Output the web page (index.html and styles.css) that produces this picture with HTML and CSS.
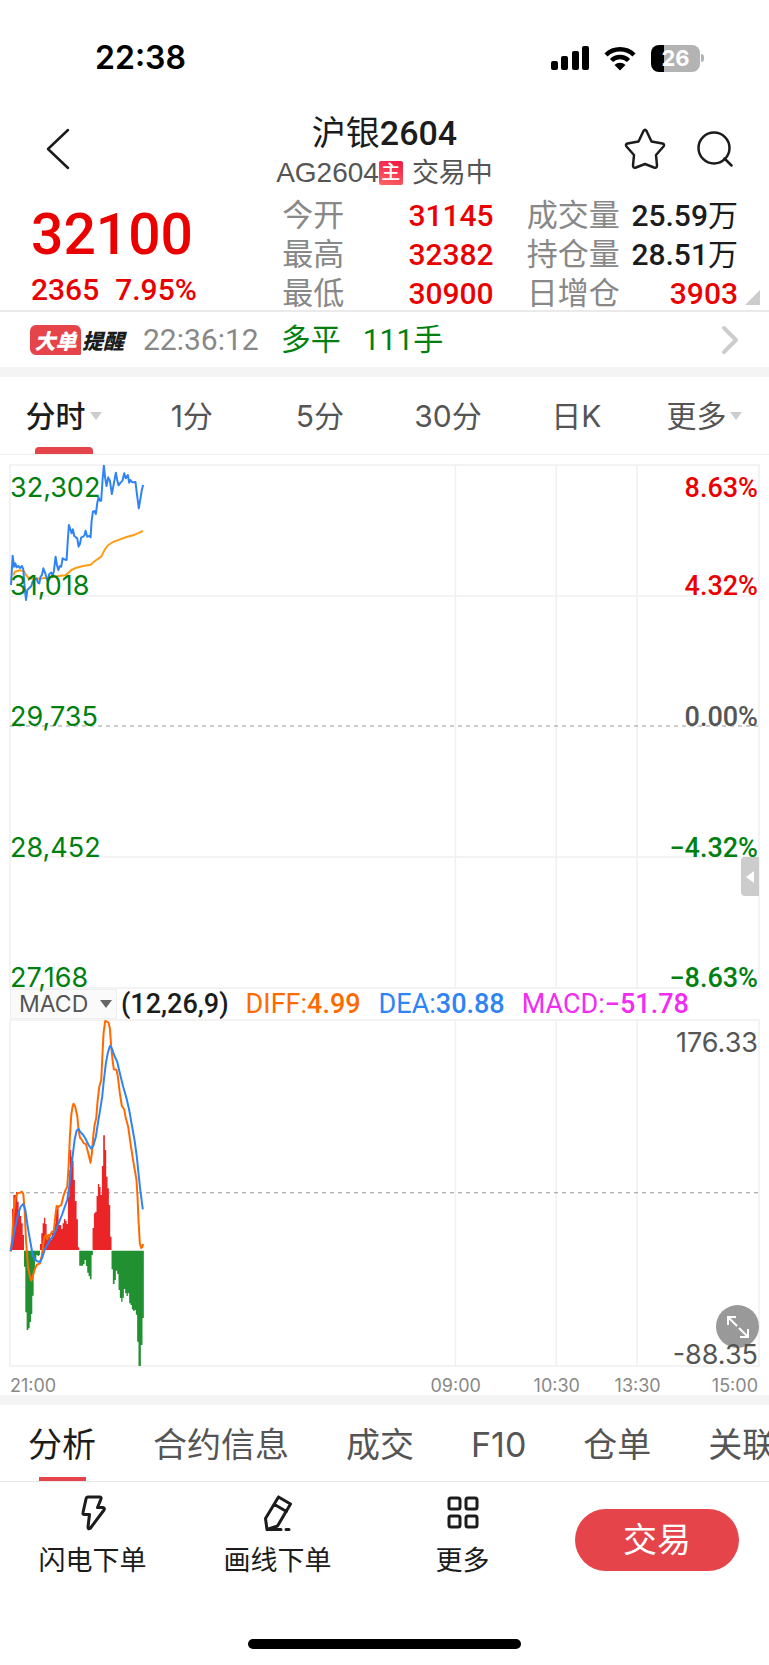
FILE: index.html
```html
<!DOCTYPE html>
<html lang="zh-CN">
<head>
<meta charset="utf-8">
<meta name="viewport" content="width=device-width, initial-scale=1">
<title>沪银2604</title>
<link rel="stylesheet" href="styles.css">
</head>
<body>
<div class="app">
  <div class="status">
    <span class="clock">22:38</span>
    <div class="status-icons">
      <svg class="signal" viewBox="0 0 38 24" aria-hidden="true"><rect x="0" y="15" width="7" height="9" rx="2"/><rect x="10" y="10" width="7" height="14" rx="2"/><rect x="21" y="5" width="7" height="19" rx="2"/><rect x="31" y="0" width="7" height="24" rx="2"/></svg>
      <svg class="wifi" viewBox="0 0 34 25" aria-hidden="true"><path d="M3 9a20 20 0 0 1 28 0M8.500 14.500a12 12 0 0 1 17 0" fill="none" stroke="#000" stroke-width="4.500"/><path d="M17 24.500l-5.500-5.500a8 8 0 0 1 11 0z"/></svg>
      <div class="battery"><span class="battery-body">26</span><span class="battery-tip"></span></div>
    </div>
  </div>

  <header class="nav">
    <button class="icon-btn back" aria-label="返回"><svg width="24" height="42" viewBox="0 0 24 42"><path d="M22 2L2 21l20 19"/></svg></button>
    <div class="heading">
      <h1 class="title">沪银<span class="title-code">2604</span></h1>
      <p class="subtitle">AG2604<span class="badge">主</span><span class="state">交易中</span></p>
    </div>
    <div class="nav-tools">
      <button class="icon-btn" aria-label="自选"><svg width="42" height="42" viewBox="0 0 42 42"><path d="M19.500 3Q21 .5 22.500 3L27.500 13.500 38.500 15.500Q41 16.500 39.500 18.500L32 27 33 37.500Q33 40.500 30 39.500L21 36 12 39.500Q9 40.500 9 37.500L10 27 2.500 18.500Q1 16.500 3.500 15.500L14.500 13.500Z"/></svg></button>
      <button class="icon-btn" aria-label="搜索"><svg width="38" height="38" viewBox="0 0 38 38"><circle cx="18" cy="18" r="15.500"/><path d="M28.500 28.500l7 7"/></svg></button>
    </div>
  </header>

  <section class="quote">
    <div class="last">
      <div class="price">32100</div>
      <div class="change"><span>2365</span><span>7.95%</span></div>
    </div>
    <dl class="stats">
      <div class="stat"><dt>今开</dt><dd class="up">31145</dd></div>
      <div class="stat"><dt>最高</dt><dd class="up">32382</dd></div>
      <div class="stat"><dt>最低</dt><dd class="up">30900</dd></div>
    </dl>
    <dl class="stats">
      <div class="stat"><dt>成交量</dt><dd>25.59<span class="unit">万</span></dd></div>
      <div class="stat"><dt>持仓量</dt><dd>28.51<span class="unit">万</span></dd></div>
      <div class="stat"><dt>日增仓</dt><dd class="up">3903</dd></div>
    </dl>
    <svg class="corner" viewBox="0 0 15 15" aria-hidden="true"><path d="M15 0v15H0z" fill="#ccc"/></svg>
  </section>

  <a class="alert" href="#orders">
    <span class="tag"><span class="tag-hot">大单</span><span class="tag-rest">提醒</span></span>
    <span class="alert-time">22:36:12</span>
    <span class="alert-side">多平</span>
    <span class="alert-lots">111手</span>
    <svg class="chev" viewBox="0 0 18 30" aria-hidden="true"><path d="M3 3l12 12L3 27"/></svg>
  </a>

  <nav class="periods">
    <button class="period is-on">分时<i class="caret"></i></button>
    <button class="period">1分</button>
    <button class="period">5分</button>
    <button class="period">30分</button>
    <button class="period">日K</button>
    <button class="period">更多<i class="caret"></i></button>
  </nav>

  <section class="charts">
    <div class="panel panel-price">
      <svg class="plot" viewBox="30 45 2250 1569" preserveAspectRatio="none" aria-hidden="true">
        <path class="grid" d="M30 45H2280V1614H30ZM30 438H2280M30 1221H2280M1368 45V1614M1671 45V1614M1914 45V1614"/>
        <path class="mid" d="M30 828H2280"/>
        <path class="line avg" d="M40 376L44 366 52 363 62 361 72 364 78 375 86 384 100 387 130 385 160 380 196 376 204 370 214 360 230 353 250 348 272 344 285 333 304 320 315 298 325 285 340 276 360 268 380 261 405 254 420 247 429 243"/>
        <path class="line now" d="M33 405L38 317 42 350 46 340 50 352 55 348 60 354 66 348 70 358 73 400 78 450 82 420 88 414 94 408 98 395 104 388 110 385 114 398 118 400 122 380 126 375 130 355 136 370 140 385 144 395 148 372 154 368 158 378 162 362 167 320 171 345 175 360 180 348 184 350 188 325 193 328 200 330 203 280 207 225 212 240 215 250 219 238 223 258 228 262 232 265 236 290 240 282 244 262 250 260 254 255 257 242 262 260 268 258 272 262 275 215 279 185 284 183 288 192 292 160 296 142 300 152 304 152 308 90 312 47 316 85 320 108 325 82 330 92 336 132 342 100 348 68 352 90 356 106 362 98 368 92 373 70 378 85 384 75 388 98 392 90 396 96 402 97 407 96 411 130 417 175 422 145 426 120 430 105"/>
      </svg>
      <div class="scale">
        <span class="down">32,302</span><span class="pct up">8.63%</span>
        <span class="down">31,018</span><span class="pct up">4.32%</span>
        <span class="down">29,735</span><span class="pct">0.00%</span>
        <span class="down">28,452</span><span class="pct down">−4.32%</span>
        <span class="down">27,168</span><span class="pct down">−8.63%</span>
      </div>
      <button class="drawer" aria-label="展开盘口"><svg width="8" height="12" viewBox="0 0 8 12"><path d="M8 0v12L0 6z" fill="#fff"/></svg></button>
    </div>

    <div class="indicator">
      <label class="picker"><select class="picker-select" aria-label="指标"><option>MACD</option></select><i class="caret caret-dark"></i></label>
      <span class="args">(12,26,9)</span>
      <span class="diff">DIFF:<b>4.99</b></span>
      <span class="dea">DEA:<b>30.88</b></span>
      <span class="macd">MACD:<b>−51.78</b></span>
    </div>

    <div class="panel panel-macd">
      <svg class="plot" viewBox="30 30 2250 1038" preserveAspectRatio="none" aria-hidden="true">
        <path class="grid" d="M30 30H2280V1068H30ZM1368 30V1068M1671 30V1068M1914 30V1068"/>
        <path class="mid" d="M30 548H2280"/>
        <path fill="#ea2427" d="M36 720V596H40V555H48V546H52V575H56V600H60V618H64V640H68V675H72V720ZM120 720V702H124V670H128V640H132V623H136V642H140V675H150V690H156V668H160V660H164V640H168V600H172V590H176V645H184V657H188V640H192V627H196V632H200V642H204V560H208V480H210V420H214V440H217V453H221V510H225V573H230V628H234V712H238V720ZM278 720V654H282V610H286V605H290V558H294V522H298V531H302V555H306V468H310V376H315V420H319V500H323V535H327V585H331V680H335V720Z"/>
        <path fill="#219030" d="M72 722V770H76V907H80V960H85V955H89V936H93V912H97V857H101V786H105V750H109V735H113V738H117V735H120V722ZM238 722V767H250V762H254V750H258V768H262V788H266V798H270V808H275V735H279V722ZM335 722V778H339V822H344V810H348V782H352V792H356V840H360V864H364V875H368V863H372V837H376V850H380V858H384V850H388V880H392V885H396V898H400V903H404V900H408V914H412V995H416V1068H423V1005H428V924H432V722Z"/>
        <path class="line slow" d="M32 725L36 690 40 620 46 565 52 551 60 548 66 545 70 552 74 600 78 690 84 770 90 800 94 812 98 800 104 780 110 765 120 760 126 735 130 700 134 680 138 675 142 688 146 675 150 678 156 665 162 662 166 620 170 588 176 590 184 585 190 560 196 542 202 530 206 470 210 380 214 315 218 290 221 281 226 290 232 318 236 360 240 382 246 390 252 400 258 402 264 425 272 458 276 430 280 380 284 345 289 325 293 275 298 232 304 210 307 150 311 70 316 33 320 35 326 38 330 55 334 110 338 150 342 178 350 180 354 200 360 250 366 288 373 298 378 325 385 350 392 400 398 440 404 475 410 510 413 560 416 630 420 700 424 714 427 712 430 702"/>
        <path class="line now" d="M32 723L38 695 46 650 54 615 62 590 70 582 76 600 84 655 92 700 98 735 104 748 112 754 120 756 126 745 134 720 142 705 150 690 160 678 168 660 176 640 186 615 194 592 202 570 208 530 212 490 218 440 224 390 230 362 236 357 240 364 250 375 258 388 266 405 274 416 280 408 288 380 294 340 300 305 307 260 312 210 318 160 324 128 330 108 336 115 344 138 352 155 360 190 370 230 380 265 388 300 396 345 404 390 411 440 416 490 422 545 429 598"/>
      </svg>
      <button class="expand" aria-label="全屏"><svg width="24" height="24" viewBox="0 0 24 24"><path d="M11 11L2 2M2 10V2h8M13 13l9 9M22 14v8h-8"/></svg></button>
      <div class="bounds"><span>176.33</span><span>-88.35</span></div>
    </div>

    <div class="times">
      <span class="time time-first">21:00</span>
      <span class="time time-a">09:00</span>
      <span class="time time-b">10:30</span>
      <span class="time time-c">13:30</span>
      <span class="time time-last">15:00</span>
    </div>
  </section>

  <nav class="sections">
    <button class="section is-on">分析</button>
    <button class="section">合约信息</button>
    <button class="section">成交</button>
    <button class="section">F10</button>
    <button class="section">仓单</button>
    <button class="section">关联</button>
  </nav>

  <footer class="actions">
    <button class="action"><svg width="36" height="36" viewBox="0 0 36 36"><path d="M13 2H24.500Q26.500 2 26 4L22.500 12.500H28Q30 13 29 15L15.500 33Q13 35 13 32L14.500 19.500H9.500Q7.500 19.500 8 17.500L11 4Q11.500 2 13 2Z"/></svg>闪电下单</button>
    <button class="action"><svg width="36" height="36" viewBox="0 0 36 36"><path d="M18.500 2L30.500 9 17.500 31 7 34.500H21M18.500 2L5.500 23.500 7 34.500M14.500 9.500L26.500 16.500M26 34.500h3"/></svg>画线下单</button>
    <button class="action"><svg width="36" height="36" viewBox="0 0 36 36"><rect x="4" y="3" width="11" height="11" rx="2"/><rect x="21" y="3" width="11" height="11" rx="2"/><rect x="4" y="21" width="11" height="11" rx="2"/><rect x="21" y="21" width="11" height="11" rx="2"/></svg>更多</button>
    <button class="trade">交易</button>
  </footer>
  <div class="home"></div>
</div>
</body>
</html>
```

FILE: styles.css
```css
* { box-sizing: border-box; }

body {
  margin: 0;
  background: #fff;
  color: #1c1c1c;
  font-family: Roboto, "Noto Sans CJK SC", sans-serif;
  overflow-x: hidden;
}

button {
  margin: 0;
  padding: 0;
  border: 0;
  background: none;
  color: inherit;
  font: inherit;
}

h1, p, dl, dd { margin: 0; }

.app { width: 100%; overflow: hidden; }
.up { color: #eb0000; }
.down { color: #00800f; }

/* status bar */
.status {
  display: flex;
  justify-content: space-between;
  align-items: center;
  height: 112px;
  padding: 4px 65px 0 95px;
}
.clock { font: 600 32px/40px Inter, sans-serif; color: #000; }
.status-icons { display: flex; align-items: center; gap: 14px; }
.signal { width: 38px; height: 24px; }
.wifi { width: 34px; height: 25px; }
.battery { display: flex; align-items: center; gap: 1px; }
.battery-body {
  width: 49px;
  height: 27px;
  border-radius: 8px;
  background: linear-gradient(90deg, #000 27%, #b3b3b3 27%);
  color: #fff;
  font: 700 22px/27px Inter, sans-serif;
  text-align: center;
}
.battery-tip { width: 3px; height: 8px; border-radius: 0 3px 3px 0; background: #b3b3b3; }

/* title row */
.nav {
  display: grid;
  grid-template-columns: 1fr auto 1fr;
  align-items: start;
  height: 80px;
  padding: 0 35px;
}
.icon-btn { display: flex; }
.icon-btn svg, .action svg {
  fill: none;
  stroke: #1c1c1c;
  stroke-width: 2.500;
  stroke-linecap: round;
  stroke-linejoin: round;
}
.back { align-items: center; justify-self: start; height: 73px; padding-left: 11px; }
.heading { text-align: center; }
.title { font-size: 34px; line-height: 42px; font-weight: 400; }
.title-code { font-weight: 500; }
.subtitle {
  display: flex;
  align-items: center;
  justify-content: center;
  font: 28px/38px "Liberation Sans", "Noto Sans CJK SC", sans-serif;
  color: #555;
}
.badge {
  width: 24px;
  height: 24px;
  border-radius: 2px;
  background: linear-gradient(200deg, #f01846, #ff6464);
  color: #fff;
  font-size: 19px;
  font-weight: 500;
  line-height: 24px;
  text-align: center;
}
.state { margin-left: 9px; font-size: 27px; }
.nav-tools { display: flex; justify-content: flex-end; align-items: center; gap: 30px; height: 73px; }

/* quote */
.quote {
  position: relative;
  display: grid;
  grid-template-columns: 218fr 211fr 211fr;
  column-gap: 33px;
  padding: 4px 31px 0 31px;
  height: 120px;
  border-bottom: 2px solid #eaeaea;
}
.last { color: #eb0000; font-weight: 500; }
.price { font-size: 57px; line-height: 78px; }
.change { display: flex; gap: 16px; font-size: 30px; line-height: 32px; }
.stat { display: flex; justify-content: space-between; font-size: 31px; line-height: 39px; }
.stat dt { color: #888; }
.stat dd { font-size: 30px; font-weight: 500; }
.unit { font-weight: 400; }
.corner { position: absolute; right: 9px; bottom: 5px; width: 15px; height: 15px; }

/* large-order alert */
.alert {
  display: flex;
  align-items: center;
  height: 65px;
  padding: 0 30px;
  border-bottom: 10px solid #f4f4f4;
  font-size: 30px;
  line-height: 40px;
  color: #00800f;
  text-decoration: none;
}
.tag {
  display: flex;
  align-items: center;
  font: italic 900 21px/30px "Noto Sans CJK SC", sans-serif;
}
.tag-hot {
  width: 51px;
  border-radius: 6px 6px 1px 6px;
  background: #e5444a;
  color: #fff;
  text-align: center;
}
.tag-rest { margin-left: 1px; color: #1c1c1c; }
.alert-time { margin-left: 19px; color: #888; }
.alert-side { margin-left: 22px; }
.alert-lots { margin-left: 22px; }
.chev {
  width: 18px;
  height: 30px;
  margin-left: auto;
  fill: none;
  stroke: #ccc;
  stroke-width: 4;
  stroke-linecap: round;
  stroke-linejoin: round;
}

/* period tabs */
.periods {
  display: grid;
  grid-template-columns: repeat(6, 1fr);
  height: 78px;
  border-bottom: 1px solid #eee;
}
.period {
  position: relative;
  display: flex;
  align-items: center;
  justify-content: center;
  padding-right: 1px;
  font: 30px/40px Inter, "Noto Sans CJK SC", sans-serif;
  color: #555;
}
.period.is-on { color: #1c1c1c; font-weight: 500; }
.period.is-on::after {
  content: "";
  position: absolute;
  left: 27%;
  bottom: 0;
  width: 58px;
  height: 7px;
  border-radius: 4px 4px 0 0;
  background: #e5444a;
}
.caret {
  flex: none;
  margin-left: 4px;
  border: 6px solid transparent;
  border-top: 8px solid #ccc;
  border-bottom: 0;
}
.caret-dark { margin: 0; border-top-color: #666; }

/* charts */
.charts { padding: 10px 10px 0; border-bottom: 10px solid #f4f4f4; }
.panel { position: relative; }
.panel-price { height: 523px; }
.panel-macd { height: 346px; }
.plot { position: absolute; left: 0; top: 0; width: 100%; height: 100%; overflow: visible; }
.plot path { vector-effect: non-scaling-stroke; }
.grid { fill: none; stroke: #f0f0f0; stroke-width: 1.500; }
.mid { fill: none; stroke: #999; stroke-width: 1; stroke-dasharray: 4 4; }
.line { fill: none; stroke-width: 2; stroke-linejoin: round; }
.now { stroke: #2f84f5; }
.avg { stroke: #ff9d12; }
.slow { stroke: #ff6a00; }
.scale {
  position: relative;
  display: grid;
  grid-template-columns: 1fr auto;
  grid-template-rows: 34px 98px 131px 131px 130px;
  align-items: end;
  padding: 0 1px 0 0;
  font: 27px/22px Inter, sans-serif;
}
.pct { font: 500 27px/22px Roboto, sans-serif; text-align: right; }
.pct:not(.up):not(.down) { color: #555; }
.drawer {
  position: absolute;
  right: 0;
  top: 392px;
  display: flex;
  align-items: center;
  justify-content: center;
  width: 18px;
  height: 39px;
  border-radius: 4px 0 0 4px;
  background: #ccc;
}
.indicator {
  display: flex;
  align-items: center;
  height: 32px;
  font-size: 27px;
  line-height: 30px;
}
.indicator b { font-weight: 500; }
.picker {
  display: flex;
  align-items: center;
  width: 107px;
  height: 30px;
  padding: 0 4px 0 8px;
  border: 1px solid #eee;
  background: #fafafa;
}
.picker-select {
  flex: 1;
  min-width: 0;
  padding: 0;
  border: 0;
  background: none;
  appearance: none;
  font: 23px/28px Inter, sans-serif;
  color: #555;
}
.args { margin-left: 4px; font-weight: 500; }
.diff { margin-left: 17px; color: #ff6a00; }
.dea { margin-left: 18px; color: #2f84f5; }
.macd { margin-left: 17px; color: #f22cf2; }
.bounds {
  position: relative;
  display: flex;
  flex-direction: column;
  justify-content: space-between;
  align-items: flex-end;
  height: 100%;
  padding: 12px 1px 0 0;
  font: 27px/22px Inter, sans-serif;
  color: #555;
}
.expand {
  position: absolute;
  right: 0;
  bottom: 18px;
  display: flex;
  align-items: center;
  justify-content: center;
  width: 43px;
  height: 43px;
  border-radius: 50%;
  background: #999;
}
.expand svg { fill: none; stroke: #fff; stroke-width: 2; }
.times { position: relative; height: 29px; font: 18px/40px Inter, sans-serif; color: #888; }
.time { position: absolute; top: 0; }
.time-first { left: 0; }
.time-a { left: 59.5%; transform: translateX(-50%); }
.time-b { left: 73%; transform: translateX(-50%); }
.time-c { left: 83.8%; transform: translateX(-50%); }
.time-last { right: 1px; }

/* section tabs */
.sections {
  display: flex;
  gap: 57px;
  height: 77px;
  padding-left: 28px;
  border-bottom: 1px solid #e8e8e8;
  overflow: hidden;
}
.section {
  position: relative;
  flex: none;
  padding-top: 3px;
  font: 34px/40px Inter, "Noto Sans CJK SC", sans-serif;
  color: #555;
}
.section.is-on { color: #1c1c1c; }
.section.is-on::after {
  content: "";
  position: absolute;
  left: 50%;
  bottom: 0;
  width: 47px;
  height: 4px;
  margin-left: -23px;
  background: #e5444a;
}

/* bottom actions */
.actions {
  display: grid;
  grid-template-columns: 185fr 185fr 185fr 204fr;
  align-items: center;
  height: 116px;
  padding-right: 10px;
}
.action {
  display: flex;
  flex-direction: column;
  align-items: center;
  gap: 11px;
  padding-bottom: 6px;
  font-size: 27px;
  line-height: 38px;
}
.action svg { stroke-width: 3; }
.trade {
  justify-self: center;
  width: 164px;
  height: 62px;
  border-radius: 31px;
  background: #e5444a;
  color: #fff;
  font-size: 34px;
  line-height: 62px;
}
.home { width: 273px; height: 10px; margin: 41px auto 16px; border-radius: 5px; background: #000; }
```
